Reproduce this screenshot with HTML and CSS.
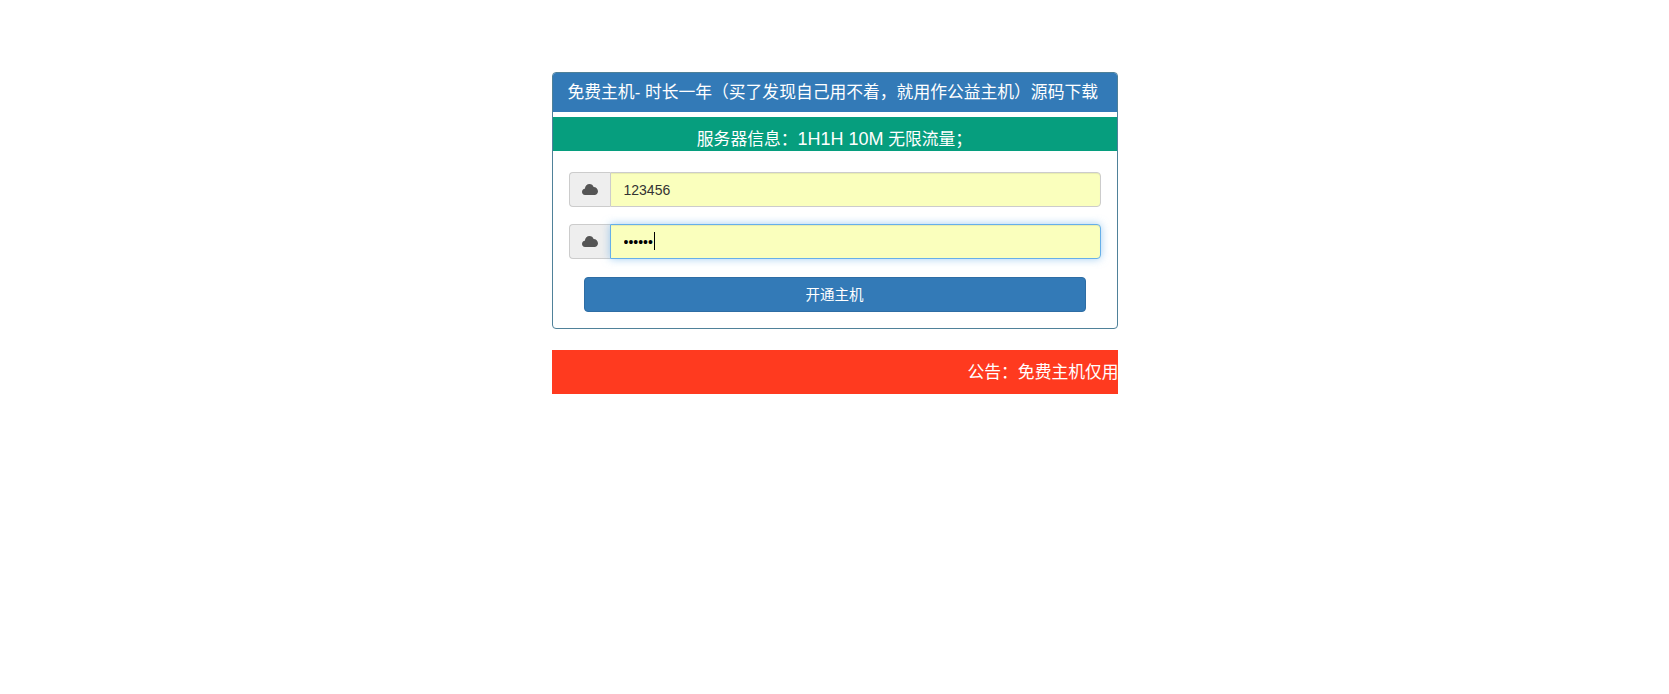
FILE: index.html
```html
<!doctype html>
<html>
<head>
    <meta charset="utf-8">
    <title>免费主机</title>
    <link rel="stylesheet" href="styles.css">
</head>

<body>
    <div class="wrap">
        <div class="panel">
            <div class="panel-heading">免费主机- 时长一年（买了发现自己用不着，就用作公益主机）源码下载</div>
            <div class="info">服务器信息：<span class="latin">1H1H 10M</span> 无限流量；</div>
            <form class="panel-body">
                <div class="input-group">
                    <span class="addon">
                        <svg class="cloud" viewBox="0 0 16 11"><path d="M3 11C1 11 0 9.500 0 8c0-1.700 1.200-3 2.800-3.200C3.200 2 5 0 7.500 0c2 0 3.500 1.200 4.100 3C14 3 16 5 16 7.300 16 9.500 14.300 11 12.500 11z"/></svg>
                    </span>
                    <input class="form-control" type="text" value="123456">
                </div>
                <div class="input-group">
                    <span class="addon">
                        <svg class="cloud" viewBox="0 0 16 11"><path d="M3 11C1 11 0 9.500 0 8c0-1.700 1.200-3 2.800-3.200C3.200 2 5 0 7.500 0c2 0 3.500 1.200 4.100 3C14 3 16 5 16 7.300 16 9.500 14.300 11 12.500 11z"/></svg>
                    </span>
                    <input class="form-control" type="password" value="123456" autofocus>
                    <span class="caret"></span>
                </div>
                <div class="btn-row">
                    <button class="btn" type="button">开通主机</button>
                </div>
            </form>
        </div>
        <div class="notice">公告：免费主机仅用</div>
    </div>
</body>
</html>
```

FILE: styles.css
```css
* {
  box-sizing: border-box;
}

html {
  font-family: "Liberation Sans", "Noto Sans CJK SC", sans-serif;
}

body {
  margin: 0;
  background: #ffffff;
  color: #333333;
  font-size: 14px;
}

.wrap {
  width: 566px;
  margin: 72px auto 0;
}

.panel {
  border: 1px solid #4f8199;
  border-radius: 4px;
  overflow: hidden;
}

.panel-heading {
  height: 39px;
  padding: 0 15px;
  background-color: #337ab7;
  color: #ffffff;
  font-size: 16.8px;
  line-height: 40px;
  white-space: nowrap;
}

.info {
  height: 34px;
  margin-top: 5px;
  padding-top: 10px;
  background-color: #069e7e;
  color: #ffffff;
  font-size: 16.8px;
  line-height: 24px;
  text-align: center;
  white-space: nowrap;
}

.latin {
  font-size: 18px;
}

.panel-body {
  padding: 21px 16px 16px;
}

.input-group {
  position: relative;
  display: flex;
  height: 35px;
  margin-bottom: 17px;
}

.addon {
  display: flex;
  align-items: center;
  justify-content: center;
  width: 41px;
  background-color: #eeeeee;
  border: 1px solid #cccccc;
  border-right: 0;
  border-radius: 4px 0 0 4px;
}

.cloud {
  width: 16px;
  height: 11px;
  fill: #555555;
}

.form-control {
  flex: 1;
  min-width: 0;
  padding: 6px 13px;
  background-color: #faffbd;
  border: 1px solid #cccccc;
  border-radius: 0 4px 4px 0;
  color: #333333;
  font: 14px "Liberation Sans", sans-serif;
  outline: 0;
  box-shadow: inset 0 1px 1px rgba(0,0,0,.075);
}

.form-control:focus {
  border-color: #66afe9;
  caret-color: transparent;
  color: #000000;
  box-shadow: inset 0 1px 1px rgba(0,0,0,.075), 0 0 8px rgba(102,175,233,.6);
}

.caret {
  position: absolute;
  left: 85px;
  top: 8px;
  width: 1px;
  height: 18px;
  background-color: #000000;
}

.btn-row {
  padding: 1px 15px 0;
}

.btn {
  display: block;
  width: 100%;
  height: 35px;
  padding: 0 0 2px;
  background-color: #337ab7;
  border: 1px solid #2e6da4;
  border-radius: 4px;
  color: #ffffff;
  font: 14.500px "Liberation Sans", "Noto Sans CJK SC", sans-serif;
}

.notice {
  height: 44px;
  margin-top: 21px;
  padding-left: 416px;
  overflow: hidden;
  background-color: #ff3a1f;
  color: #ffffff;
  font-size: 16.8px;
  line-height: 46px;
  white-space: nowrap;
}
```
